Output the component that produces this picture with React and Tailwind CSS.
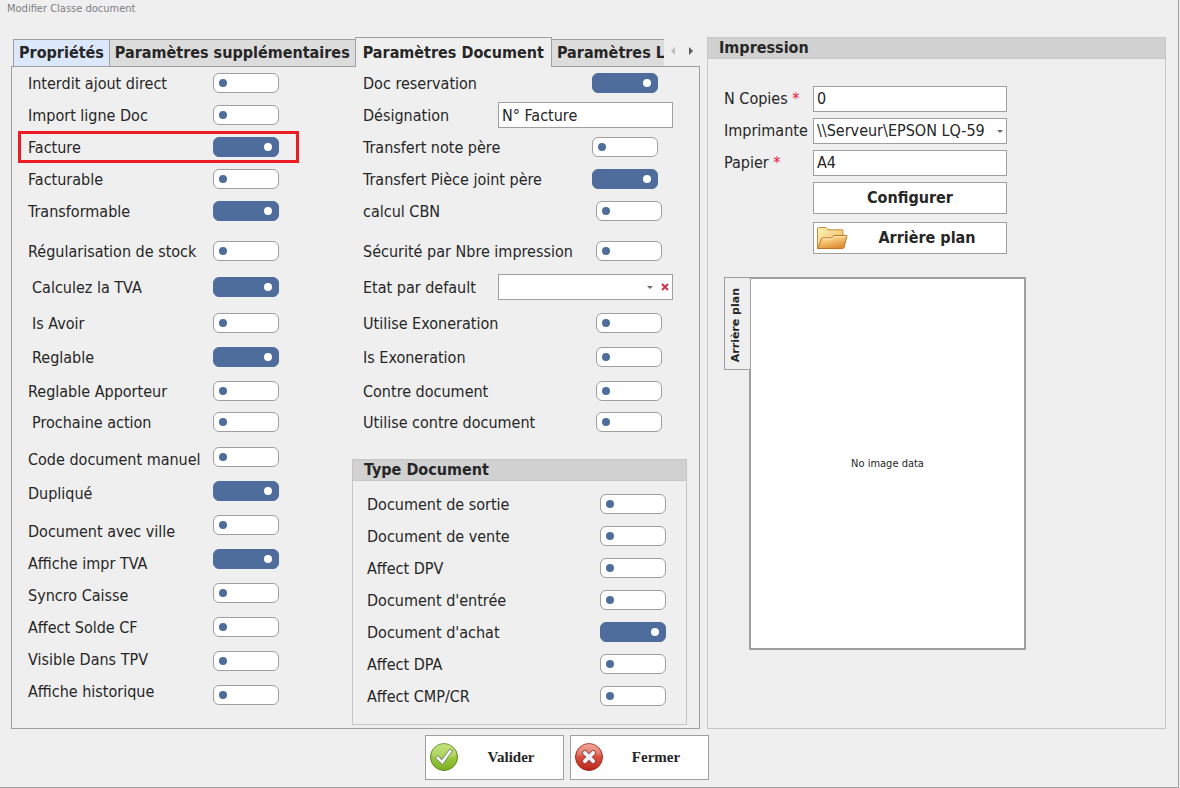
import { useState } from 'react'

const leftTop = [
  { id: 'ajout', label: 'Interdit ajout direct', height: 'h-8' },
  { id: 'import', label: 'Import ligne Doc', height: 'h-8' },
  { id: 'facture', label: 'Facture', height: 'h-8', on: true, highlight: true },
  { id: 'facturable', label: 'Facturable', height: 'h-8' },
  { id: 'transformable', label: 'Transformable', height: 'h-8', on: true },
  { id: 'regularisation', label: 'Régularisation de stock', height: 'h-9 mt-1.5' },
  { id: 'tva', label: 'Calculez la TVA', height: 'h-9', on: true, indent: true },
  { id: 'avoir', label: 'Is Avoir', height: 'h-9', indent: true },
  { id: 'reglable', label: 'Reglable', height: 'h-8', on: true, indent: true },
  { id: 'apporteur', label: 'Reglable Apporteur', height: 'h-9' },
  { id: 'prochaine', label: 'Prochaine action', height: 'h-[26px]', indent: true },
]

const leftBottom = [
  { id: 'code', label: 'Code document manuel', height: 'h-[34px]' },
  { id: 'duplique', label: 'Dupliqué', height: 'h-[34px]', on: true },
  { id: 'ville', label: 'Document avec ville', height: 'h-8 mt-[5px]' },
  { id: 'imprTva', label: 'Affiche impr TVA', height: 'h-8', on: true },
  { id: 'syncro', label: 'Syncro Caisse', height: 'h-8' },
  { id: 'solde', label: 'Affect Solde CF', height: 'h-8' },
  { id: 'tpv', label: 'Visible Dans TPV', height: 'h-8' },
  { id: 'historique', label: 'Affiche historique', height: 'h-8' },
]

const middle = [
  { id: 'reservation', label: 'Doc reservation', height: 'h-8', end: 'mr-[15px]', on: true },
  { id: 'designation', label: 'Désignation', height: 'h-8', kind: 'text' },
  { id: 'note', label: 'Transfert note père', height: 'h-8', end: 'mr-[15px]' },
  { id: 'piece', label: 'Transfert Pièce joint père', height: 'h-8', end: 'mr-[15px]', on: true },
  { id: 'cbn', label: 'calcul CBN', height: 'h-8', end: 'mr-[11px]' },
  { id: 'securite', label: 'Sécurité par Nbre impression', height: 'h-9 mt-1.5', end: 'mr-[11px]' },
  { id: 'etat', label: 'Etat par default', height: 'h-9', kind: 'select' },
  { id: 'exoneration', label: 'Utilise Exoneration', height: 'h-9', end: 'mr-[11px]' },
  { id: 'isExoneration', label: 'Is Exoneration', height: 'h-8', end: 'mr-[11px]' },
  { id: 'contre', label: 'Contre document', height: 'h-9', end: 'mr-[11px]' },
  { id: 'utiliseContre', label: 'Utilise contre document', height: 'h-[26px]', end: 'mr-[11px]' },
]

const types = [
  { id: 'sortie', label: 'Document de sortie' },
  { id: 'vente', label: 'Document de vente' },
  { id: 'dpv', label: 'Affect DPV' },
  { id: 'entree', label: "Document d'entrée" },
  { id: 'achat', label: "Document d'achat", on: true },
  { id: 'dpa', label: 'Affect DPA' },
  { id: 'cmp', label: 'Affect CMP/CR' },
]

const field = 'h-[26px] w-full rounded-none border border-[#9f9f9f] bg-white px-[3px] text-[#262626] outline-none'

function Toggle({ id, on = false, className = '' }) {
  const [checked, setChecked] = useState(on)
  return (
    <input
      id={id}
      type="checkbox"
      role="switch"
      checked={checked}
      onChange={(e) => setChecked(e.target.checked)}
      className={`flex h-5 w-[66px] shrink-0 appearance-none items-center rounded-md border border-[#9f9f9f] bg-white pr-1.5 pl-[5px] before:block before:size-2 before:rounded-full before:bg-[#4e6d9c] checked:justify-end checked:border-[#4e6d9c] checked:bg-[#4e6d9c] checked:before:bg-white ${className}`}
    />
  )
}

function Caret() {
  return (
    <svg viewBox="0 0 6 3" className="pointer-events-none h-[3px] w-1.5" aria-hidden="true">
      <path d="M0 0h6L3 3z" fill="#6b6b6b" />
    </svg>
  )
}

function FolderIcon() {
  return (
    <svg viewBox="0 0 32 24" className="h-6 w-8 shrink-0" aria-hidden="true">
      <defs>
        <linearGradient id="folderBack" x1="0" y1="0" x2="1" y2="1">
          <stop offset="0" stopColor="#fdf3b4" />
          <stop offset="1" stopColor="#eeb65a" />
        </linearGradient>
        <linearGradient id="folderFront" x1="0" y1="0" x2="0.5" y2="1">
          <stop offset="0" stopColor="#fde9b0" />
          <stop offset="0.5" stopColor="#f5c470" />
          <stop offset="1" stopColor="#dd8f33" />
        </linearGradient>
      </defs>
      <path d="M1.500 22.500V2.500q0-1 1-1h7q.8 0 1.300.8l1 1.500h14.200q1 0 1 1V11L22 22.500z" fill="url(#folderBack)" stroke="#c98b3c" />
      <path d="M1.800 22.500 5.500 12.800q.3-.9 1.200-.9h8.800l2.200-2.400h12.600q.8 0 .6.800l-3 11.500q-.3.800-1.200.8z" fill="url(#folderFront)" stroke="#bf7329" />
      <path d="M6.600 13h9.300l2.200-2.400h11.500" fill="none" stroke="#fff3cf" strokeWidth="0.800" />
    </svg>
  )
}

function CheckIcon() {
  return (
    <svg viewBox="0 0 30 30" className="size-[30px] shrink-0" aria-hidden="true">
      <defs>
        <linearGradient id="green" x1="0" y1="0" x2="0" y2="1">
          <stop offset="0" stopColor="#b9dc63" />
          <stop offset="0.500" stopColor="#9cc93b" />
          <stop offset="1" stopColor="#7eae25" />
        </linearGradient>
      </defs>
      <circle cx="15" cy="15" r="13.500" fill="url(#green)" stroke="#5d8a22" />
      <path d="M2.500 14a12.500 12.500 0 0 1 25-1Q20 18 2.500 14z" fill="#fff" opacity="0.180" />
      <path d="m6.300 15.800 2.800-2.300 3.600 4.300L20.600 7.200l3.100 1.300-10.200 14.300z" fill="#f4f6fb" stroke="#6a7f5a" strokeWidth="0.900" strokeLinejoin="round" />
    </svg>
  )
}

function CrossIcon() {
  return (
    <svg viewBox="0 0 30 30" className="size-[30px] shrink-0" aria-hidden="true">
      <defs>
        <linearGradient id="red" x1="0" y1="0" x2="0" y2="1">
          <stop offset="0" stopColor="#ee9a8c" />
          <stop offset="0.500" stopColor="#d9503f" />
          <stop offset="1" stopColor="#b92319" />
        </linearGradient>
      </defs>
      <circle cx="15" cy="15" r="13.500" fill="url(#red)" stroke="#a5281e" />
      <path d="M2.500 14a12.500 12.500 0 0 1 25-1Q18 11 2.500 14z" fill="#fff" opacity="0.150" />
      <path d="m10.800 10.800 8.400 8.400m0-8.400-8.400 8.400" stroke="#8f3a36" strokeWidth="5.400" strokeLinecap="round" />
      <path d="m10.800 10.800 8.400 8.400m0-8.400-8.400 8.400" stroke="#eef2fa" strokeWidth="3.800" strokeLinecap="round" />
    </svg>
  )
}

function Control({ row }) {
  if (row.kind === 'text') {
    return (
      <div className="w-[175px]">
        <input id={row.id} type="text" defaultValue="N° Facture" className={field} />
      </div>
    )
  }
  if (row.kind === 'select') {
    return (
      <div className="relative w-[175px]">
        <select id={row.id} defaultValue="" className={`${field} appearance-none`}>
          <option value=""></option>
        </select>
        <div className="absolute inset-y-0 right-1 flex items-center gap-2">
          <Caret />
          <button type="button" aria-label="Effacer" className="size-2">
            <svg viewBox="0 0 8 8" className="size-2">
              <path d="m1 1 6 6M7 1 1 7" stroke="#cf2b45" strokeWidth="1.800" />
            </svg>
          </button>
        </div>
      </div>
    )
  }
  return <Toggle id={row.id} on={row.on} className={row.end} />
}

function PropertiesColumn() {
  return (
    <div className="ml-1.5 w-[281px] shrink-0">
      {leftTop.map((row) => (
        <div
          key={row.id}
          className={`flex items-center justify-between pr-5 pl-2.5 ${row.height} ${row.highlight ? 'ring-3 ring-[#ed1c24] ring-inset' : ''}`}
        >
          <label htmlFor={row.id} className={row.indent ? 'pt-0.5 pl-1' : 'pt-0.5'}>{row.label}</label>
          <Toggle id={row.id} on={row.on} />
        </div>
      ))}
      {/* labels and switches run on their own pitch here */}
      <div className="mt-[5px] flex justify-between pr-5 pl-2.5">
        <div className="flex flex-col pt-0.5">
          {leftBottom.map((row) => (
            <label key={row.id} htmlFor={row.id} className={`flex items-center pt-0.5 ${row.height}`}>
              {row.label}
            </label>
          ))}
        </div>
        <div className="flex flex-col">
          {leftBottom.map((row) => (
            <div key={row.id} className="flex h-[34px] items-center">
              <Toggle id={row.id} on={row.on} />
            </div>
          ))}
        </div>
      </div>
    </div>
  )
}

function DocumentColumn() {
  return (
    <div className="mr-3 ml-[53px] flex-1">
      {middle.map((row) => (
        <div key={row.id} className={`flex items-center justify-between pr-3.5 pl-[11px] ${row.height}`}>
          <label htmlFor={row.id} className="pt-0.5">{row.label}</label>
          <Control row={row} />
        </div>
      ))}
      <section className="mt-6 border border-[#c6c6c6]">
        <h2 className="h-[21px] border-b border-[#c6c6c6] bg-[#d1d1d1] pl-[11px] leading-5 font-bold">Type Document</h2>
        <div className="pt-[7px] pr-5 pb-3 pl-3.5">
          {types.map((row) => (
            <div key={row.id} className="flex h-8 items-center justify-between">
              <label htmlFor={row.id} className="pt-0.5">{row.label}</label>
              <Toggle id={row.id} on={row.on} />
            </div>
          ))}
        </div>
      </section>
    </div>
  )
}

function Tabs() {
  const tab = 'h-[27px] border-t border-[#9f9f9f] px-[5px] text-left font-bold whitespace-nowrap'
  return (
    <div role="tablist" className="flex h-[29px] items-end pl-0.5">
      <button type="button" role="tab" className={`${tab} shrink-0 border-l bg-[#dbe7fb]`}>Propriétés</button>
      <button type="button" role="tab" className={`${tab} shrink-0 border-l bg-[#dcdcdc]`}>Paramètres supplémentaires</button>
      <button
        type="button"
        role="tab"
        aria-selected="true"
        className="relative -mb-px h-[30px] shrink-0 border border-b-0 border-[#9f9f9f] bg-[#efefef] px-[7px] font-bold whitespace-nowrap"
      >
        Paramètres Document
      </button>
      <div className="flex-1 overflow-hidden">
        <button type="button" role="tab" className={`${tab} w-full bg-[#dcdcdc]`}>Paramètres L</button>
      </div>
      <div className="flex h-[29px] w-9 shrink-0 items-center justify-between pr-[7px] pb-px pl-[7px]">
        <button type="button" aria-label="Onglets précédents" className="w-1">
          <svg viewBox="0 0 4 8" className="h-2 w-1"><path d="M4 0v8L0 4z" fill="#bdbdbd" /></svg>
        </button>
        <button type="button" aria-label="Onglets suivants" className="w-1">
          <svg viewBox="0 0 4 8" className="h-2 w-1"><path d="M0 0v8l4-4z" fill="#5a5a5a" /></svg>
        </button>
      </div>
    </div>
  )
}

function PrintPanel() {
  const action = 'flex h-8 items-center border border-[#9f9f9f] bg-white font-bold'
  return (
    <section className="border border-[#c6c6c6]">
      <h2 className="h-[21px] border-b border-[#c6c6c6] bg-[#d1d1d1] pl-[11px] leading-5 font-bold">Impression</h2>
      <div className="grid grid-cols-[89px_194px] items-center gap-y-1.5 pt-[27px] pl-4">
        <label htmlFor="copies">N Copies <span className="text-[#f0143c]">*</span></label>
        <input id="copies" type="text" defaultValue="0" className={`${field} pb-0.5`} />
        <label htmlFor="imprimante">Imprimante</label>
        <div className="relative">
          <select id="imprimante" className={`${field} appearance-none`}>
            <option>\\Serveur\EPSON LQ-59</option>
          </select>
          <div className="pointer-events-none absolute inset-y-0 right-1 flex items-center">
            <Caret />
          </div>
        </div>
        <label htmlFor="papier">Papier <span className="text-[#f0143c]">*</span></label>
        <input id="papier" type="text" defaultValue="A4" className={`${field} pb-0.5`} />
        <button type="button" className={`${action} col-start-2 justify-center`}>Configurer</button>
        <button type="button" className={`${action} col-start-2 mt-0.5 pl-0.5`}>
          <FolderIcon />
          <span className="flex-1">Arrière plan</span>
        </button>
      </div>
      <div className="mt-[23px] flex items-start pl-4">
        <button
          type="button"
          className="relative z-10 -mr-px flex h-[93px] w-[26px] items-center justify-center border border-r-0 border-[#9f9f9f] bg-[#efefef] pt-1 pr-1"
        >
          <span className="rotate-180 font-['DejaVu_Sans',sans-serif] text-[11px] leading-4 font-bold whitespace-nowrap [writing-mode:vertical-rl]">
            Arrière plan
          </span>
        </button>
        <div className="flex h-[373px] w-[277px] items-center justify-center border-2 border-[#9f9f9f] bg-white text-[11px]">
          No image data
        </div>
      </div>
    </section>
  )
}

export default function App() {
  const footerButton = 'flex h-[45px] w-[139px] items-center border border-[#9f9f9f] bg-white pb-px pl-[3px] font-["Liberation_Serif",serif] text-[15px] font-bold'
  return (
    <div className="min-h-screen bg-[#efefef] pr-px font-['DejaVu_Sans_Condensed','Noto_Sans',sans-serif] text-[16px] leading-6 text-[#262626]">
      <div className="min-h-screen border-r border-b border-[#9f9f9f]">
        <h1 className="h-[37px] pt-px pl-[7px] text-[11px] leading-4 text-[#7d7d86]">Modifier Classe document</h1>
        <main className="grid grid-cols-[689px_1fr] gap-[7px] pr-3 pl-[11px]">
          <div>
            <Tabs />
            <div role="tabpanel" className="flex border border-[#9f9f9f] pb-[3px]">
              <PropertiesColumn />
              <DocumentColumn />
            </div>
          </div>
          <PrintPanel />
        </main>
        <footer className="mt-1.5 flex justify-center gap-1.5 pr-11 pb-[7px]">
          <button type="button" className={footerButton}>
            <CheckIcon />
            <span className="flex-1">Valider</span>
          </button>
          <button type="button" className={footerButton}>
            <CrossIcon />
            <span className="flex-1">Fermer</span>
          </button>
        </footer>
      </div>
    </div>
  )
}
